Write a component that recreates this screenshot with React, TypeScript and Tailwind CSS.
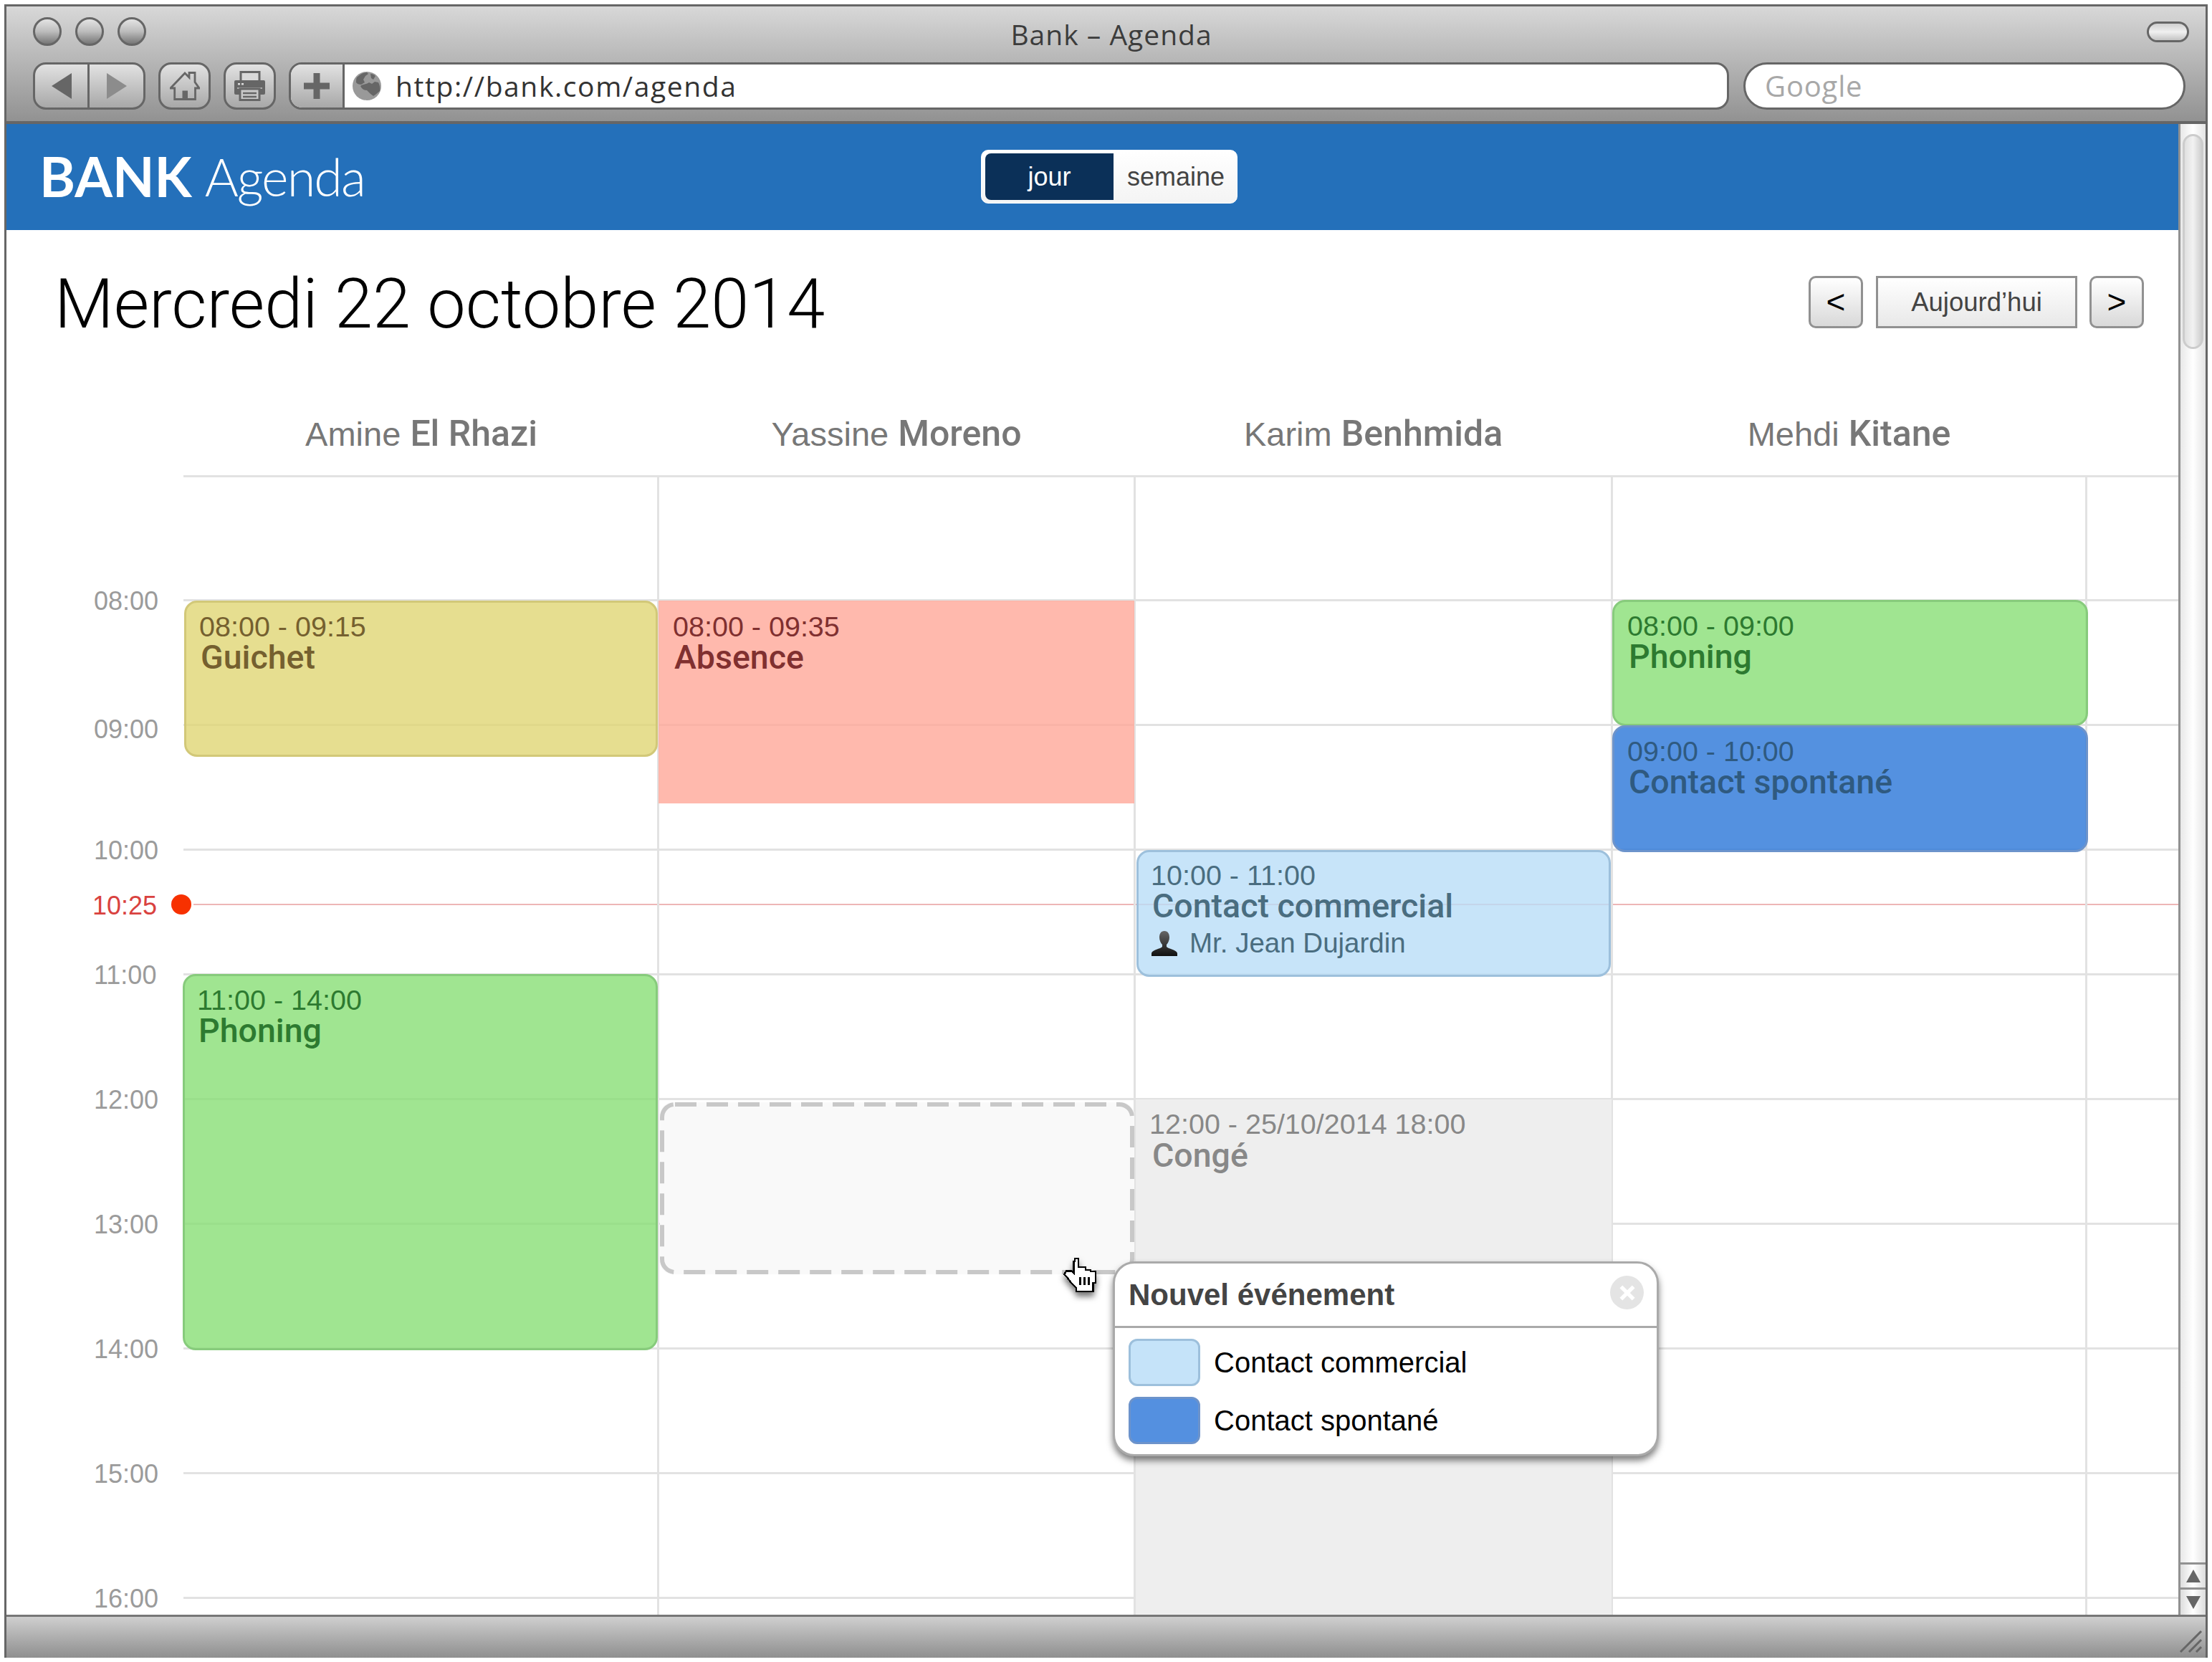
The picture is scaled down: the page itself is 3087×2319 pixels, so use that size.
import { ReactNode } from 'react';

const sans = 'font-["Liberation_Sans",Arial,sans-serif]';
const medium = "font-['Roboto',sans-serif] font-medium";
const headName = `${medium} text-[50px]`;
const hours = ['08:00', '09:00', '10:00', '11:00', '12:00', '13:00', '14:00', '15:00', '16:00'];
const columns = 'grid grid-cols-[664px_665px_666px_662px_1fr]';

type Ev = {
  time: string;
  title: string;
  box: string;
  text: string;
  person?: string;
};

const TrafficLight = () => (
  <div className="w-[40px] h-[40px] rounded-full border-[3px] border-[#666] bg-gradient-to-b from-[#e4e4e4] via-[#bcbcbc] to-[#777]" />
);

const ToolButton = ({ children, className }: { children: ReactNode; className: string }) => (
  <div className={`h-[66px] border-[3px] border-[#666] rounded-[18px] bg-gradient-to-b from-[#e2e2e2] to-[#a8a8a8] flex items-center justify-center ${className}`}>
    {children}
  </div>
);

const EventCard = ({ ev, className }: { ev: Ev; className: string }) => (
  <div className={`absolute ${className} ${ev.box} ${ev.text} ${sans}`}>
    <div className="text-[39.5px] leading-[40px]">{ev.time}</div>
    <div className={`text-[46.5px] leading-[47px] ml-[2px] ${medium}`}>{ev.title}</div>
    {ev.person && (
      <div className="flex items-center text-[38.5px] leading-[50px] mt-[3px]">
        <svg viewBox="0 0 38 36" className="w-[38px] h-[36px] mr-[16px]">
          <defs>
            <linearGradient id="person" x1="0" y1="0" x2="0" y2="1">
              <stop offset="0" stopColor="#666" />
              <stop offset="1" stopColor="#111" />
            </linearGradient>
          </defs>
          <path d="M19 1c5 0 7 4 7 9 0 4-2 8-4 10v3c2 3 14 4 15 9v4H1v-4c1-5 13-6 15-9v-3c-2-2-4-6-4-10 0-5 2-9 7-9z" fill="url(#person)" />
        </svg>
        {ev.person}
      </div>
    )}
  </div>
);

const yellow = 'bg-[#e0d674]/80 border-[3px] border-[#d2c878] rounded-[18px] px-[18px] pt-[13px]';
const green = 'bg-[#88df76]/80 border-[3px] border-[#87cb7c] rounded-[18px] px-[17px] pt-[13px]';
const greenWide = 'bg-[#88df76]/80 border-[3px] border-[#87cb7c] rounded-[18px] px-[18px] pt-[13px]';
const lightBlue = 'bg-[#b9ddf8]/80 border-[3px] border-[#9dc0dc] rounded-[18px] px-[17px] pt-[12px]';
const blue = 'bg-[#2975d8]/80 border-[3px] border-[#6c93cb] rounded-[18px] px-[18px] pt-[13px]';
const salmon = 'bg-[#ffa899]/80 px-[20px] pt-[16px]';

export default function App() {
  return (
    <div className={`w-[3087px] h-[2319px] bg-white p-[6px] overflow-hidden ${sans}`}>
      <div className="w-[3075px] h-[2307px] border-x-[3px] border-[#666] flex flex-col relative">
        {/* browser chrome */}
        <div className="h-[167px] shrink-0 border-t-[3px] border-b-[4px] border-[#666] bg-gradient-to-b from-[#d8d8d8] to-[#929292] relative">
          <div className="flex items-center h-[54px] mt-[8px] pl-[37px] gap-[19px]">
            <TrafficLight />
            <TrafficLight />
            <TrafficLight />
          </div>
          <div className="absolute left-0 right-0 top-[16px] text-center pl-[15px] font-['Open_Sans',sans-serif] text-[39px] leading-[46px] text-[#3c3c3c] tracking-[1px]">Bank – Agenda</div>
          <div className="absolute right-[23px] top-[21px] w-[59px] h-[29px] rounded-full border-[3px] border-[#666] bg-gradient-to-b from-[#d0d0d0] via-[#f0f0f0] to-[#c4c4c4]" />
          <div className="flex items-center mt-[16px] pl-[37px] h-[66px]">
            <ToolButton className="w-[157px] !justify-start">
              <div className="w-[76px] h-full border-r-[3px] border-[#666] flex items-center justify-center">
                <svg viewBox="0 0 28 36" className="w-[28px] h-[36px]"><path d="M28 0v36L0 18z" fill="#666" /></svg>
              </div>
              <div className="flex-1 h-full flex items-center justify-center">
                <svg viewBox="0 0 28 36" className="w-[28px] h-[36px]"><path d="M0 0v36l28-18z" fill="#8c8c8c" /></svg>
              </div>
            </ToolButton>
            <ToolButton className="w-[73px] ml-[18px]">
              <svg viewBox="0 0 42 40" className="w-[42px] h-[40px]">
                <path d="M1 23 21 2l6 6V1.500h8v13l6 8.500h-5.500v15.500H6.700V23z" fill="none" stroke="#666" strokeWidth="2.800" strokeLinejoin="miter" />
                <path d="M17.500 26.500h7.500v12h-7.500z" fill="#666" />
              </svg>
            </ToolButton>
            <ToolButton className="w-[73px] ml-[18px]">
              <svg viewBox="0 0 43 42" className="w-[43px] h-[42px]">
                <rect x="9" y="1.500" width="26" height="13" fill="#d8d8d8" stroke="#666" strokeWidth="3" />
                <rect x="0" y="13" width="43" height="20" rx="2" fill="#666" />
                <path d="M5 17h3v2.500H5zM10 17h3v2.500h-3z" fill="#ddd" />
                <path d="M4 23h35v2H4z" fill="#aaa" />
                <rect x="8" y="25" width="27" height="15.500" fill="#c8c8c8" stroke="#666" strokeWidth="3" />
                <path d="M12 31h19M12 36h19" stroke="#666" strokeWidth="2.500" />
              </svg>
            </ToolButton>
            <div className="ml-[18px] w-[2010px] h-[66px] flex border-[3px] border-[#666] rounded-[18px] overflow-hidden bg-white">
              <div className="w-[75px] border-r-[3px] border-[#666] bg-gradient-to-b from-[#e2e2e2] to-[#a8a8a8] flex items-center justify-center">
                <svg viewBox="0 0 36 36" className="w-[36px] h-[36px]"><path d="M13.500 0h9v13.500H36v9H22.500V36h-9V22.500H0v-9h13.500z" fill="#666" /></svg>
              </div>
              <div className="flex items-center pl-[11px]">
                <svg viewBox="0 0 40 40" className="w-[40px] h-[40px]">
                  <circle cx="20" cy="20" r="20" fill="#999" />
                  <path d="M6 8c4-4 9-7 14-7l2 2-4 3-3 5 2 4-5 3c-3 0-6-1-7-3 0-3 0-5 1-7z" fill="#666" />
                  <path d="M11 20c4-3 9-2 12-5l4 2 4-3 5 1c2 4 3 8 2 12-3 2-5 5-9 7-3-2-6-5-9-8-4 0-7-2-9-6z" fill="#666" />
                  <path d="M25 3c3 0 5 1 7 3l-3 5-3-2z" fill="#666" />
                </svg>
                <span className="ml-[20px] font-['Open_Sans',sans-serif] text-[39px] tracking-[1.6px] text-[#333]">http://bank.com/agenda</span>
              </div>
            </div>
            <div className="ml-[20px] w-[617px] h-[66px] rounded-full border-[3px] border-[#666] bg-white flex items-center pl-[27px] font-['Open_Sans',sans-serif] text-[40px] tracking-[0.8px] text-[#a8a8a8]">Google</div>
          </div>
        </div>

        <div className="flex flex-1 min-h-0">
          <div className="flex-1 min-w-0 flex flex-col relative overflow-hidden">
            {/* app header */}
            <div className="h-[148px] shrink-0 bg-[#2470ba] relative flex items-center pl-[46px]">
              <span className="font-['Lato',sans-serif] font-bold text-[76px] leading-none text-white -mt-[2px]">BANK</span>
              <span className="font-['Lato',sans-serif] font-light text-[72px] tracking-[-2px] leading-none text-white ml-[18px] -mt-[2px]">Agenda</span>
              <div className="absolute left-[1360px] top-[36px] w-[358px] h-[75px] bg-gradient-to-b from-white to-[#f4f4f4] border-[1px] border-white rounded-[10px] pl-[5px] py-[4px] flex text-[36px]">
                <div className="w-[179px] bg-[#0b3058] rounded-l-[8px] flex items-center justify-center text-white">jour</div>
                <div className="flex-1 flex items-center justify-center pl-[2px] text-[#444]">semaine</div>
              </div>
            </div>

            {/* date + nav */}
            <div className="h-[245px] shrink-0 relative flex items-start">
              <h1 className="ml-[67px] mt-[48px] font-['Roboto',sans-serif] font-light text-[95.5px] leading-[110px] text-black">Mercredi 22 octobre 2014</h1>
              <div className="absolute left-[2515px] top-[64px] flex gap-[18px] text-[36.5px]">
                <div className="w-[76px] h-[73px] rounded-[10px] border-[3px] border-[#919191] bg-gradient-to-b from-white to-[#d9d9d9] flex items-center justify-center text-[46px] text-black">&lt;</div>
                <div className="w-[281px] h-[73px] border-[3px] border-[#919191] bg-gradient-to-b from-white to-[#e8e8e8] flex items-center justify-center pt-[2px] text-[#444]">Aujourd’hui</div>
                <div className="w-[76px] -ml-[1px] h-[73px] rounded-[10px] border-[3px] border-[#919191] bg-gradient-to-b from-white to-[#d9d9d9] flex items-center justify-center text-[46px] text-black">&gt;</div>
              </div>
            </div>

            {/* agenda */}
            <div className="pl-[247px] shrink-0">
              <div className={`${columns} h-[100px] border-b-[3px] border-[#e2e2e2] text-[47px] leading-[70px] text-[#777] text-center`}>
                <div className="pt-[4px]">Amine <b className={headName}>El Rhazi</b></div>
                <div className="pt-[4px] pr-[3px]">Yassine <b className={headName}>Moreno</b></div>
                <div className="pt-[4px] pr-[3px]">Karim <b className={headName}>Benhmida</b></div>
                <div className="pt-[4px] pr-[3px]">Mehdi <b className={headName}>Kitane</b></div>
                <div />
              </div>
            </div>
            <div className="flex-1 relative">
              {/* time gutter + hour lines */}
              <div className="pt-[170px] flex flex-col">
                {hours.map(h => (
                  <div key={h} className="h-[174px] shrink-0 relative border-t-[3px] border-[#e2e2e2] ml-[247px]">
                    <span className={`absolute -left-[125px] text-[36px] leading-[44px] text-[#9b9b9b] ${h === '09:00' ? '-top-[17px]' : '-top-[22px]'}`}>{h}</span>
                  </div>
                ))}
              </div>
              {/* now marker */}
              <div className="absolute left-[261px] right-0 top-[595px] h-[2px] bg-[#edb6b6]" />
              <span className="absolute left-[120px] top-[576px] text-[36px] leading-[44px] text-[#d9423f]">10:25</span>
              <div className="absolute left-[230px] top-[582px] w-[28px] h-[28px] rounded-full bg-[#f73100]" />
              {/* columns */}
              <div className={`absolute inset-0 pl-[247px] ${columns}`}>
                <div className="relative border-r-[3px] border-[#e2e2e2]">
                  <EventCard className="left-[1px] right-[-1px] top-[172px] h-[218px]" ev={{ time: '08:00 - 09:15', title: 'Guichet', box: yellow, text: 'text-[#75602f]' }} />
                  <EventCard className="left-[-1px] right-[-1px] top-[693px] h-[525px]" ev={{ time: '11:00 - 14:00', title: 'Phoning', box: green, text: 'text-[#2d7a30]' }} />
                </div>
                <div className="relative border-r-[3px] border-[#e2e2e2]">
                  <EventCard className="left-[-1px] right-[-1px] top-[172px] h-[283px]" ev={{ time: '08:00 - 09:35', title: 'Absence', box: salmon, text: 'text-[#803030]' }} />
                  <div className="absolute left-[1px] right-[-1px] top-[872px] h-[240px] rounded-[18px] bg-[#f9f9f9]">
                    <svg className="absolute inset-0 w-full h-full" fill="none">
                      <rect x="3" y="3" width="656" height="234" rx="18" stroke="#c8c8c8" strokeWidth="6" strokeDasharray="30 14" />
                    </svg>
                  </div>
                </div>
                <div className="relative border-r-[3px] border-[#e2e2e2]">
                  <div className={`absolute left-0 right-[-1px] top-[868px] bottom-0 bg-[#eeeeee] pl-[19px] pt-[14px] text-[#888] ${sans}`}>
                    <div className="text-[39.5px] leading-[40px]">12:00 - 25/10/2014 18:00</div>
                    <div className={`text-[46.5px] leading-[48px] ml-[4px] ${medium}`}>Congé</div>
                  </div>
                  <EventCard className="left-[1px] right-0 top-[520px] h-[177px]" ev={{ time: '10:00 - 11:00', title: 'Contact commercial', person: 'Mr. Jean Dujardin', box: lightBlue, text: 'text-[#4a6d80]' }} />
                </div>
                <div className="relative border-r-[3px] border-[#e2e2e2]">
                  <EventCard className="left-[-1px] right-[-4px] top-[171px] h-[176px]" ev={{ time: '08:00 - 09:00', title: 'Phoning', box: greenWide, text: 'text-[#2d7a30]' }} />
                  <EventCard className="left-[-1px] right-[-4px] top-[346px] h-[177px]" ev={{ time: '09:00 - 10:00', title: 'Contact spontané', box: blue, text: 'text-[#2f5a80]' }} />
                </div>
                <div />
              </div>

              {/* new event popup */}
              <div className="absolute left-[1544px] top-[1094px] w-[762px] h-[272px] bg-white border-[3px] border-[#aaa] rounded-[30px] shadow-[0_6px_10px_rgba(0,0,0,0.5)]">
                <div className="h-[90px] border-b-[3px] border-[#aaa] flex items-center pl-[19px] text-[42px] font-bold text-[#444] relative">
                  Nouvel événement
                  <div className="absolute right-[18px] top-[17px] w-[47px] h-[47px] rounded-full bg-[#e4e4e4] flex items-center justify-center">
                    <svg viewBox="0 0 24 24" className="w-[26px] h-[26px]"><path d="M4 4l16 16M20 4 4 20" stroke="#fff" strokeWidth="5" /></svg>
                  </div>
                </div>
                <div className="flex flex-col pl-[19px] pt-[15px] gap-[15px] text-[40px] text-black">
                  <div className="flex items-center gap-[19px]">
                    <div className="w-[100px] h-[66px] rounded-[12px] bg-[#c5e3f9] border-[3px] border-[#9dc0dc]" />
                    <span>Contact commercial</span>
                  </div>
                  <div className="flex items-center gap-[19px]">
                    <div className="w-[100px] h-[66px] rounded-[12px] bg-[#5490e0] border-[3px] border-[#6c93cb]" />
                    Contact spontané
                  </div>
                </div>
              </div>

              {/* hand cursor */}
              <svg viewBox="0 0 240 240" className="absolute left-[1461px] top-[1074px] w-[80px] h-[80px] drop-shadow-[0_6px_4px_rgba(0,0,0,0.55)]" shapeRendering="crispEdges">
                <path d="M90 48h15v36h30v12h20v6h21v48h-10v35H95v-15l-20-20-15-20-15-15 10-15h20l10 10V60h5z" fill="#fff" stroke="#000" strokeWidth="7" />
                <path d="M112 125v35M130 125v35M148 125v35" stroke="#000" strokeWidth="7" />
              </svg>
            </div>
          </div>

          {/* scrollbar */}
          <div className="w-[38px] shrink-0 border-l-[3px] border-[#919191] flex flex-col bg-gradient-to-r from-[#e8e8e8] via-white to-[#e4e4e4] relative">
            <div className="mt-[14px] mx-[3px] h-[300px] rounded-full border-[3px] border-[#ccc] bg-gradient-to-r from-[#e0e0e0] via-[#f2f2f2] to-[#d0d0d0]" />
            <div className="mt-auto h-[35px] border-t-[3px] border-[#919191] flex items-center justify-center bg-gradient-to-r from-[#ddd] via-white to-[#ddd]">
              <svg viewBox="0 0 20 18" className="w-[20px] h-[18px]"><path d="M10 0l10 18H0z" fill="#666" /></svg>
            </div>
            <div className="h-[38px] border-t-[3px] border-[#919191] flex items-center justify-center bg-gradient-to-r from-[#ddd] via-white to-[#ddd]">
              <svg viewBox="0 0 20 18" className="w-[20px] h-[18px]"><path d="M0 0h20L10 18z" fill="#666" /></svg>
            </div>
          </div>
        </div>

        {/* status bar */}
        <div className="h-[60px] shrink-0 border-t-[3px] border-[#777] bg-gradient-to-b from-[#cfcfcf] to-[#8f8f8f] flex justify-end items-end">
          <svg viewBox="0 0 34 34" className="w-[34px] h-[34px] mb-[6px] mr-[4px]" stroke="#666" strokeWidth="3">
            <path d="M3 32 32 3M15 32 32 15M25 32l7-7" />
          </svg>
        </div>
      </div>
    </div>
  );
}
